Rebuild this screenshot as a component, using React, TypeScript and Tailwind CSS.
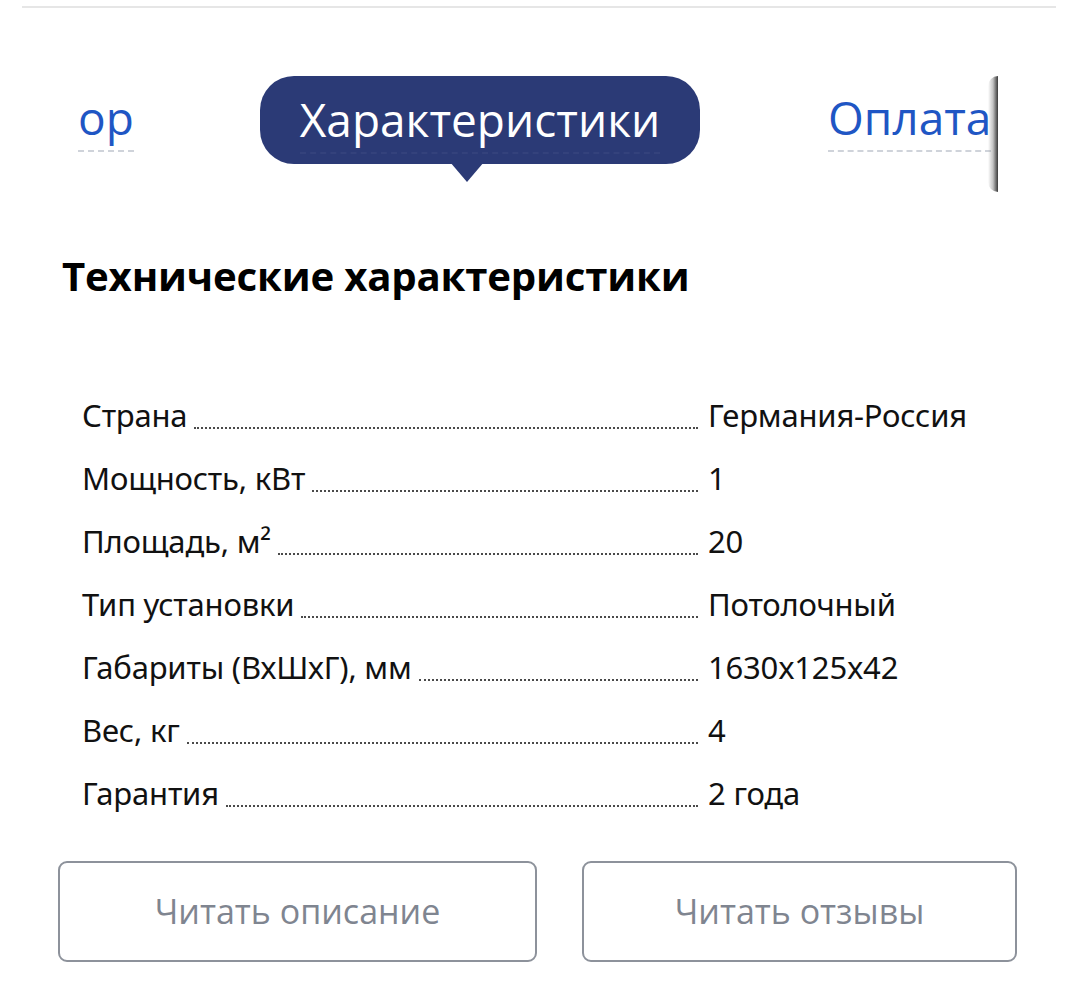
import React from 'react';

const specs: { label: React.ReactNode; value: string }[] = [
  { label: 'Страна', value: 'Германия-Россия' },
  { label: 'Мощность, кВт', value: '1' },
  { label: 'Площадь, м²', value: '20' },
  { label: 'Тип установки', value: 'Потолочный' },
  { label: 'Габариты (ВхШхГ), мм', value: '1630x125x42' },
  { label: 'Вес, кг', value: '4' },
  { label: 'Гарантия', value: '2 года' },
];

const SpecRow = ({ label, value }: { label: React.ReactNode; value: string }) => {
  return (
    <div className="flex items-baseline h-[63px]">
      <div className="flex items-baseline w-[626px] shrink-0">
        <span className="whitespace-nowrap">{label}</span>
        <span className="flex-1 ml-[7px] mr-[10px] border-b-2 border-dotted border-[#4a4a4a] translate-y-[2px]" />
      </div>
      <span className="whitespace-nowrap">{value}</span>
    </div>
  );
};

export default function App() {
  return (
    <div className="w-[1078px] h-[992px] bg-white overflow-hidden relative">
      <div className="mx-[22px] h-[2px] mt-[6px] bg-[#e6e6e6]" />

      {/* tabs */}
      <div className="relative w-[998px] h-[192px] overflow-hidden mt-[-8px]">
        <div
          className="flex items-start pt-[84px] text-[46px] leading-[66px] text-[#1f56c4] whitespace-nowrap"
          style={{ fontFamily: '"Open Sans", sans-serif' }}
        >
          <div className="ml-[78px] w-[182px] shrink-0">
            <span className="inline-block border-b-2 border-dashed border-[#cfd3da]">ор</span>
          </div>
          <div className="relative shrink-0 w-[440px] h-[88px] mt-[-8px] rounded-[34px] bg-[#2b3a76] text-white flex items-center justify-center">
            <span className="border-b-2 border-dashed border-[#34427c]">Характеристики</span>
            <div className="absolute left-[190px] top-[86px] w-0 h-0 border-l-[17px] border-r-[17px] border-t-[20px] border-l-transparent border-r-transparent border-t-[#2b3a76]" />
          </div>
          <div className="ml-[128px] shrink-0">
            <span className="inline-block border-b-2 border-dashed border-[#cfd3da]">Оплата</span>
          </div>
        </div>
        <div className="absolute right-0 top-[76px] h-[116px] w-[10px] bg-gradient-to-l from-[#3a3a3a] via-[#9a9a9a]/60 to-transparent rounded-l-full" />
      </div>

      <h2
        className="ml-[62px] mt-[54px] text-[40.2px] font-bold text-black leading-[60px] tracking-[-0.2px]"
        style={{ fontFamily: '"Open Sans", sans-serif' }}
      >
        Технические характеристики
      </h2>

      <div
        className="ml-[82px] mt-[89px] text-[31px] text-[#111] leading-[40px] tracking-[-0.2px]"
        style={{ fontFamily: '"Noto Sans", sans-serif' }}
      >
        {specs.map((s, i) => (
          <SpecRow key={i} label={s.label} value={s.value} />
        ))}
      </div>

      <div
        className="flex ml-[58px] mt-[25px] gap-[45px] text-[34px] text-[#7f8590]"
        style={{ fontFamily: '"Open Sans", sans-serif' }}
      >
        <button className="w-[479px] h-[101px] rounded-[9px] border-2 border-[#8d929b] flex items-center justify-center">
          Читать описание
        </button>
        <button className="w-[435px] h-[101px] rounded-[9px] border-2 border-[#8d929b] flex items-center justify-center">
          Читать отзывы
        </button>
      </div>
    </div>
  );
}
